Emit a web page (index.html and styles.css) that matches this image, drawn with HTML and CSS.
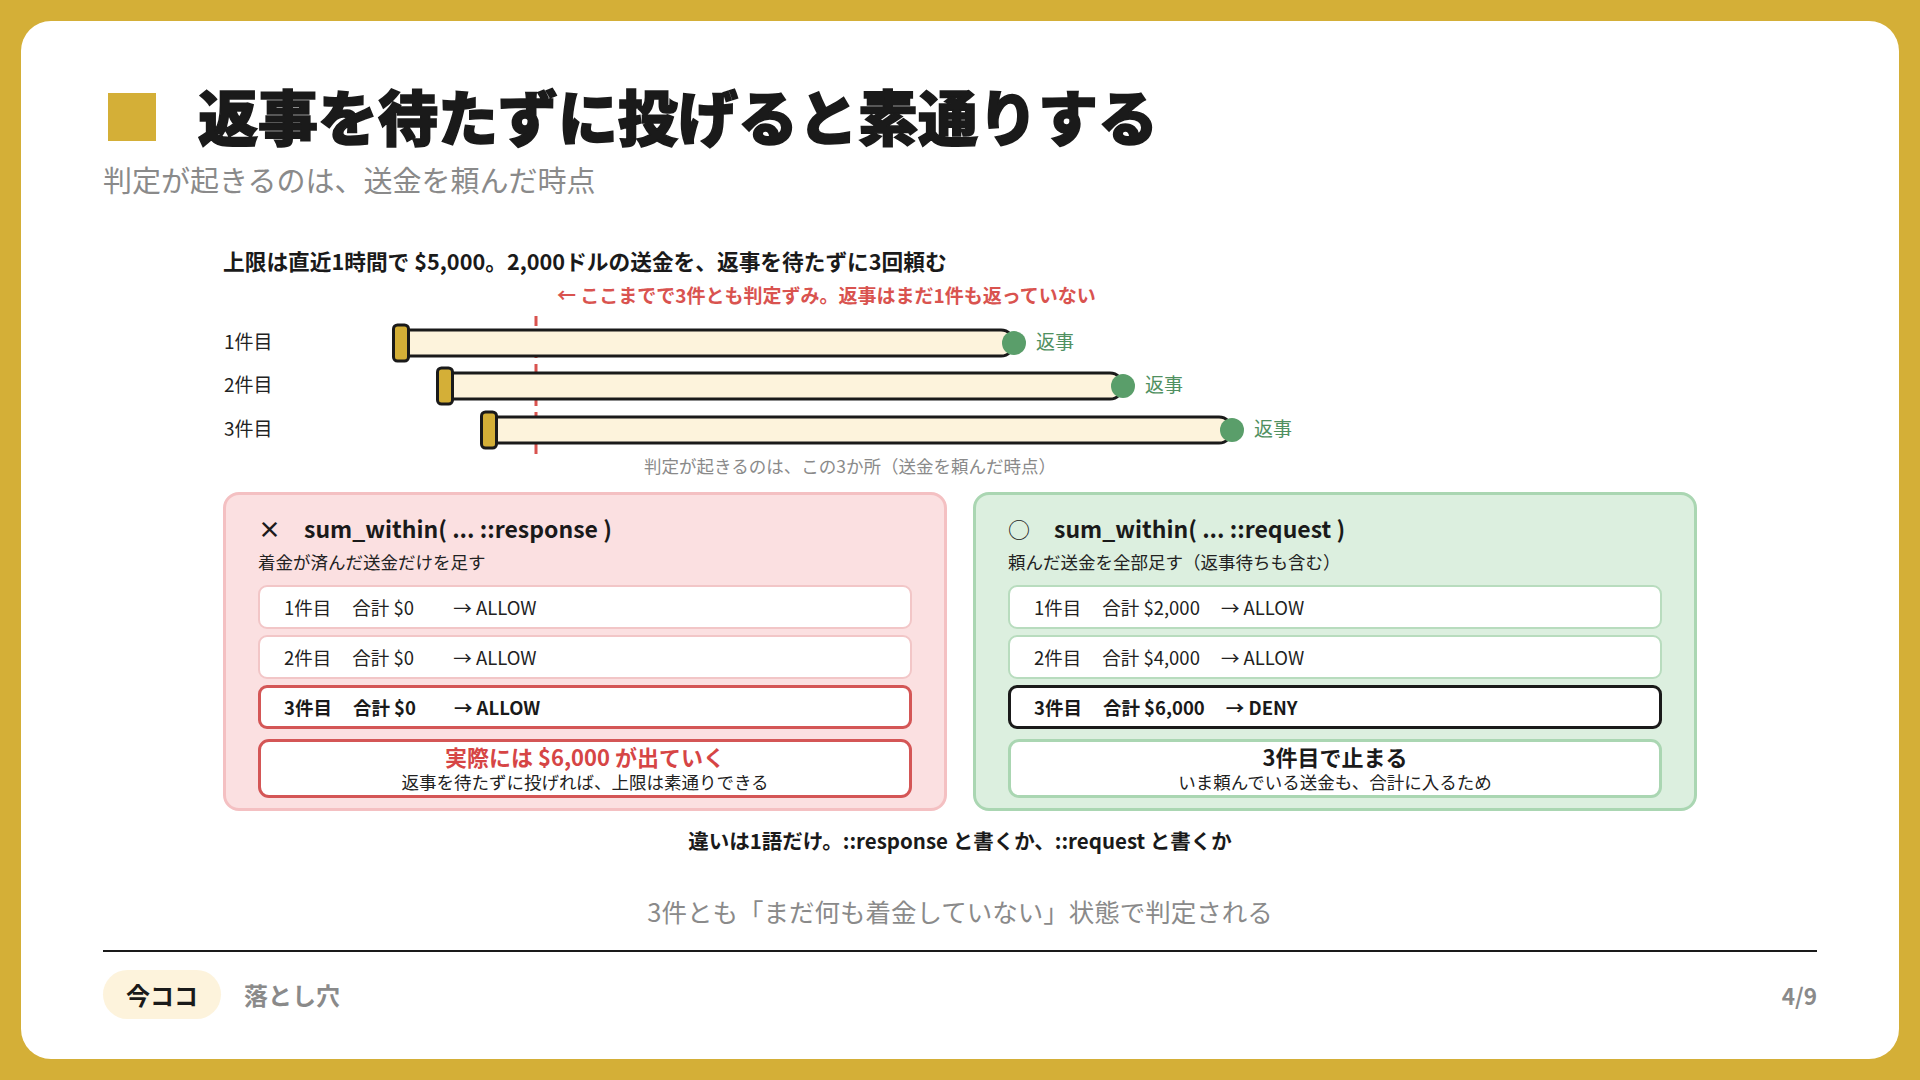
FILE: index.html
```html
<!DOCTYPE html>
<html lang="ja">
<head>
<meta charset="utf-8">
<title>返事を待たずに投げると素通りする</title>
<link rel="stylesheet" href="styles.css">
</head>
<body>
<div class="slide">
  <header class="head">
    <h1 class="title"><span class="title-mark"></span>返事を待たずに投げると素通りする</h1>
    <p class="subtitle">判定が起きるのは、送金を頼んだ時点</p>
  </header>

  <main class="main">
    <p class="chart-heading">上限は直近1時間で $5,000。2,000ドルの送金を、返事を待たずに3回頼む</p>
    <svg class="chart" width="1474" height="205" viewBox="0 0 1474 205" xmlns="http://www.w3.org/2000/svg">
      <text x="334" y="28" class="t-annot">← ここまでで3件とも判定ずみ。返事はまだ1件も返っていない</text>
      <line x1="313" y1="41" x2="313" y2="180" stroke="#d9534f" stroke-width="3" stroke-dasharray="10 6"/>

      <text x="1" y="74" class="t-label">1件目</text>
      <text x="1" y="117" class="t-label">2件目</text>
      <text x="1" y="161" class="t-label">3件目</text>

      <path d="M178 55 H778 A13 13 0 0 1 778 81 H178 Z" fill="#fdf3dc" stroke="#1a1a1a" stroke-width="3"/>
      <rect x="170.5" y="50" width="15" height="36" rx="4" fill="#d4af37" stroke="#1a1a1a" stroke-width="3"/>
      <circle cx="791" cy="68" r="12" fill="#5a9e6a"/>
      <text x="813" y="74" class="t-reply">返事</text>

      <path d="M222 98 H887 A13 13 0 0 1 887 124 H222 Z" fill="#fdf3dc" stroke="#1a1a1a" stroke-width="3"/>
      <rect x="214.5" y="93" width="15" height="36" rx="4" fill="#d4af37" stroke="#1a1a1a" stroke-width="3"/>
      <circle cx="900" cy="111" r="12" fill="#5a9e6a"/>
      <text x="922" y="117" class="t-reply">返事</text>

      <path d="M266 142 H996 A13 13 0 0 1 996 168 H266 Z" fill="#fdf3dc" stroke="#1a1a1a" stroke-width="3"/>
      <rect x="258.5" y="137" width="15" height="36" rx="4" fill="#d4af37" stroke="#1a1a1a" stroke-width="3"/>
      <circle cx="1009" cy="155" r="12" fill="#5a9e6a"/>
      <text x="1031" y="161" class="t-reply">返事</text>

      <text x="627" y="198" text-anchor="middle" class="t-caption">判定が起きるのは、この3か所（送金を頼んだ時点）</text>
    </svg>

    <div class="cards">
      <section class="card card-bad">
        <h2 class="card-title"><span class="card-icon">×</span>sum_within( ... ::response )</h2>
        <p class="card-sub">着金が済んだ送金だけを足す</p>
        <div class="rows">
          <div class="row"><span class="r-label">1件目</span><span class="r-sum">合計 $0</span><span class="r-res">→ ALLOW</span></div>
          <div class="row"><span class="r-label">2件目</span><span class="r-sum">合計 $0</span><span class="r-res">→ ALLOW</span></div>
          <div class="row row-hit row-hit-bad"><span class="r-label">3件目</span><span class="r-sum">合計 $0</span><span class="r-res">→ ALLOW</span></div>
          <div class="result result-bad">
            <strong class="result-main">実際には $6,000 が出ていく</strong>
            <span class="result-sub">返事を待たずに投げれば、上限は素通りできる</span>
          </div>
        </div>
      </section>

      <section class="card card-good">
        <h2 class="card-title"><span class="card-icon">○</span>sum_within( ... ::request )</h2>
        <p class="card-sub">頼んだ送金を全部足す（返事待ちも含む）</p>
        <div class="rows">
          <div class="row"><span class="r-label">1件目</span><span class="r-sum">合計 $2,000</span><span class="r-res">→ ALLOW</span></div>
          <div class="row"><span class="r-label">2件目</span><span class="r-sum">合計 $4,000</span><span class="r-res">→ ALLOW</span></div>
          <div class="row row-hit row-hit-good"><span class="r-label">3件目</span><span class="r-sum">合計 $6,000</span><span class="r-res">→ DENY</span></div>
          <div class="result result-good">
            <strong class="result-main">3件目で止まる</strong>
            <span class="result-sub">いま頼んでいる送金も、合計に入るため</span>
          </div>
        </div>
      </section>
    </div>

    <p class="diff">違いは1語だけ。::response と書くか、::request と書くか</p>
  </main>

  <p class="footnote">3件とも「まだ何も着金していない」状態で判定される</p>

  <footer class="footer">
    <div class="crumbs">
      <span class="crumb-now">今ココ</span>
      <span class="crumb-next">落とし穴</span>
    </div>
    <span class="page">4/9</span>
  </footer>
</div>
</body>
</html>
```

FILE: styles.css
```css
* { box-sizing: border-box; }

html, body {
  margin: 0;
  padding: 0;
}

body {
  width: 1920px;
  height: 1080px;
  background: #d4af37;
  font-family: "Noto Sans CJK JP", "Noto Sans", sans-serif;
  color: #1a1a1a;
  padding: 21px;
  overflow: hidden;
}

.slide {
  width: 1878px;
  height: 1038px;
  background: #ffffff;
  border-radius: 30px;
  padding: 55px 82px 0;
  display: flex;
  flex-direction: column;
}

.head { display: flex; flex-direction: column; }

.title {
  margin: 0;
  display: flex;
  align-items: center;
  font-size: 60px;
  line-height: 77px;
  font-weight: 900;
  color: #1a1a1a;
  -webkit-text-stroke: 1.6px #1a1a1a;
}

.title-mark {
  width: 48px;
  height: 48px;
  background: #d4af37;
  margin-left: 5px;
  margin-right: 42px;
  margin-top: 4px;
  flex: none;
}

.subtitle {
  margin: 8px 0 0;
  font-size: 29px;
  line-height: 36px;
  color: #8a8a8a;
}

.main {
  width: 1474px;
  margin: 50px auto 0;
  display: flex;
  flex-direction: column;
}

.chart-heading {
  margin: 0;
  font-size: 21.7px;
  line-height: 28px;
  font-weight: 700;
}

.chart { display: block; }

.t-annot { font-size: 19px; font-weight: 700; fill: #d9534f; }
.t-label { font-size: 19px; fill: #222222; }
.t-reply { font-size: 19px; fill: #4f9060; }
.t-caption { font-size: 17.5px; fill: #8a8a8a; }

.cards {
  margin-top: 12px;
  display: grid;
  grid-template-columns: 724px 724px;
  gap: 26px;
}

.card {
  border: 3px solid;
  border-radius: 16px;
  padding: 18px 32px 10px;
}

.card-bad { background: #fbe0e1; border-color: #f4c0c2; }
.card-good { background: #dcefdf; border-color: #aad6b2; }

.card-title {
  margin: 0;
  display: flex;
  align-items: center;
  font-size: 23px;
  line-height: 30px;
  font-weight: 700;
}

.card-icon {
  width: 46px;
  flex: none;
  font-weight: 700;
}

.card-good .card-icon { font-weight: 400; font-size: 22px; }

.card-sub {
  margin: 7px 0 0;
  font-size: 17.5px;
  line-height: 24px;
  color: #222222;
}

.rows {
  margin-top: 11px;
  display: flex;
  flex-direction: column;
  gap: 6px;
}

.row {
  height: 44px;
  background: #ffffff;
  border: 2px solid;
  border-radius: 9px;
  padding-left: 24px;
  display: flex;
  align-items: center;
  gap: 21px;
  font-size: 18.5px;
  color: #222222;
}

.card-bad .row { border-color: #f2c6c7; }
.card-good .row { border-color: #b8dcbe; }

.r-sum { min-width: 80px; }

.row-hit {
  border-width: 3px;
  padding-left: 23px;
  font-weight: 700;
  color: #1a1a1a;
}

.card-bad .row-hit-bad { border-color: #d45656; }
.card-good .row-hit-good { border-color: #1a1a1a; }

.result {
  margin-top: 4px;
  height: 59px;
  background: #ffffff;
  border: 3px solid;
  border-radius: 11px;
  padding-top: 2px;
  display: flex;
  flex-direction: column;
  align-items: center;
  justify-content: flex-start;
}

.result-bad { border-color: #d45656; }
.result-good { border-color: #aad6b2; }

.result-main {
  font-size: 22px;
  line-height: 24px;
  font-weight: 700;
}

.result-bad .result-main { color: #d64545; }

.result-sub {
  margin-top: 3px;
  font-size: 17.5px;
  line-height: 22px;
  color: #222222;
}

.diff {
  margin: 16px 0 0;
  text-align: center;
  font-size: 20.5px;
  line-height: 26px;
  font-weight: 700;
}

.footnote {
  margin: 41px 0 0;
  text-align: center;
  font-size: 25.5px;
  line-height: 34px;
  color: #8a8a8a;
  padding-bottom: 22px;
  border-bottom: 2px solid #1a1a1a;
}

.footer {
  margin-top: 18px;
  display: flex;
  align-items: center;
  justify-content: space-between;
}

.crumbs {
  display: flex;
  align-items: center;
  gap: 23px;
}

.crumb-now {
  height: 49px;
  padding: 0 23px;
  border-radius: 25px;
  background: #fdf3dc;
  display: flex;
  align-items: center;
  font-size: 24px;
  font-weight: 700;
  color: #1a1a1a;
}

.crumb-next {
  font-size: 24px;
  font-weight: 700;
  color: #8a8a8a;
}

.page {
  font-size: 22.5px;
  font-weight: 700;
  color: #8a8a8a;
}
```
